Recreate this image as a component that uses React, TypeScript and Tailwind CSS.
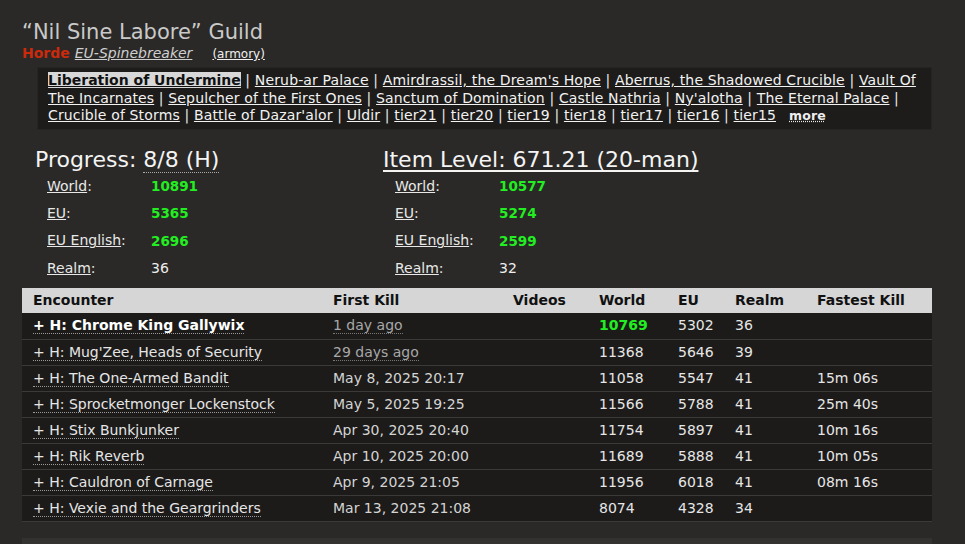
import React from 'react';

const raids = [
  'Nerub-ar Palace',
  "Amirdrassil, the Dream's Hope",
  'Aberrus, the Shadowed Crucible',
  'Vault Of The Incarnates',
  'Sepulcher of the First Ones',
  'Sanctum of Domination',
  'Castle Nathria',
  "Ny'alotha",
  'The Eternal Palace',
  'Crucible of Storms',
  "Battle of Dazar'alor",
  'Uldir',
  'tier21',
  'tier20',
  'tier19',
  'tier18',
  'tier17',
  'tier16',
  'tier15',
];

const stats = [
  { heading: 'Progress: ', value: '8/8 (H)', ranks: ['10891', '5365', '2696', '36'] },
  { heading: 'Item Level: 671.21 (20-man)', value: '', ranks: ['10577', '5274', '2599', '32'] },
];

const rankLabels = ['World', 'EU', 'EU English', 'Realm'];

const kills = [
  { name: 'Chrome King Gallywix', first: '1 day ago', recent: true, world: '10769', eu: '5302', realm: '36', fastest: '', top: true },
  { name: "Mug'Zee, Heads of Security", first: '29 days ago', recent: true, world: '11368', eu: '5646', realm: '39', fastest: '' },
  { name: 'The One-Armed Bandit', first: 'May 8, 2025 20:17', world: '11058', eu: '5547', realm: '41', fastest: '15m 06s' },
  { name: 'Sprocketmonger Lockenstock', first: 'May 5, 2025 19:25', world: '11566', eu: '5788', realm: '41', fastest: '25m 40s' },
  { name: 'Stix Bunkjunker', first: 'Apr 30, 2025 20:40', world: '11754', eu: '5897', realm: '41', fastest: '10m 16s' },
  { name: 'Rik Reverb', first: 'Apr 10, 2025 20:00', world: '11689', eu: '5888', realm: '41', fastest: '10m 05s' },
  { name: 'Cauldron of Carnage', first: 'Apr 9, 2025 21:05', world: '11956', eu: '6018', realm: '41', fastest: '08m 16s' },
  { name: 'Vexie and the Geargrinders', first: 'Mar 13, 2025 21:08', world: '8074', eu: '4328', realm: '34', fastest: '' },
];

export default function App() {
  return (
    <div className="min-h-[544px] bg-[#2a2927] text-[#e8e8e8] font-['DejaVu_Sans',Verdana,sans-serif] px-[22px] pt-[19px] overflow-hidden">
      {/* Guild header */}
      <div className="text-[21px] leading-[26px] text-[#c9c9c9]">“Nil Sine Labore” Guild</div>
      <div className="flex items-baseline text-[14px] leading-[17px]">
        <span className="font-bold text-[#cc2a0c]">Horde</span>
        <span className="ml-[5px] italic underline text-[#cfcfcf]">EU-Spinebreaker</span>
        <span className="ml-[20px] text-[12px] underline text-[#f0f0f0]">(armory)</span>
      </div>

      {/* Raid nav */}
      <div className="ml-[15px] mt-[4px] w-[895px] bg-[#1d1c1a] border border-[#252423] pl-[10px] pr-[12px] pt-[4px] pb-[4px] text-[14px] leading-[17.5px] tracking-[0.15px]">
        <span className="bg-[#d8d8d8] text-[#111] font-bold underline tracking-normal">Liberation of Undermine</span>
        {raids.map((r) => (
          <span key={r}>
            {' | '}
            <span className="underline text-[#f2f2f2]">{r}</span>
          </span>
        ))}
        <span className="ml-[13px] text-[12.5px] font-bold underline decoration-dotted text-[#eee]">more</span>
      </div>

      {/* Progress / item level */}
      <div className="flex mt-[18px] pl-[13px]">
        {stats.map((s, i) => (
          <div key={i} className="w-[348px]">
            <div className="text-[22px] leading-[24px] text-[#f4f4f4] whitespace-nowrap">
              {s.value ? (
                <>
                  {s.heading}
                  <span className="border-b border-dotted border-[#aaa]">{s.value}</span>
                </>
              ) : (
                <span className="underline underline-offset-[3px]">{s.heading}</span>
              )}
            </div>
            <div className="pl-[12px] pt-[1px] text-[14px]">
              {rankLabels.map((l, j) => (
                <div key={l} className="flex h-[27.4px] items-center">
                  <span className="w-[104px]">
                    <span className="underline">{l}</span>:
                  </span>
                  <span className={j < 3 ? 'font-bold text-[13.5px] text-[#22ee22]' : 'text-[#eee]'}>{s.ranks[j]}</span>
                </div>
              ))}
            </div>
          </div>
        ))}
      </div>

      {/* Kills table */}
      <table className="mt-[6px] w-[910px] border-collapse text-[14px] table-fixed">
        <colgroup>
          <col className="w-[300px]" />
          <col className="w-[180px]" />
          <col className="w-[86px]" />
          <col className="w-[79px]" />
          <col className="w-[57px]" />
          <col className="w-[82px]" />
          <col className="w-[126px]" />
        </colgroup>
        <thead>
          <tr className="bg-[#d6d6d6] text-[#111] font-bold h-[25px] text-left">
            <th className="pl-[11px]">Encounter</th>
            <th className="pl-[11px]">First Kill</th>
            <th className="pl-[11px]">Videos</th>
            <th className="pl-[11px]">World</th>
            <th className="pl-[11px]">EU</th>
            <th className="pl-[11px]">Realm</th>
            <th className="pl-[11px]">Fastest Kill</th>
          </tr>
        </thead>
        <tbody>
          {kills.map((k) => (
            <tr key={k.name} className="h-[26px] bg-[#1c1b1a] border-b border-[#3b3a39] text-[#e6e6e6]">
              <td className="pl-[11px] whitespace-nowrap">
                <span className={`border-b border-dotted border-[#999] ${k.top ? 'font-bold text-white' : ''}`}>
                  + H: {k.name}
                </span>
              </td>
              <td className="pl-[11px] whitespace-nowrap">
                <span className={k.recent ? 'text-[#a8a8a8] border-b border-dotted border-[#777]' : 'text-[#d4d4d4]'}>
                  {k.first}
                </span>
              </td>
              <td />
              <td className={`pl-[11px] ${k.top ? 'font-bold text-[#22ee22]' : ''}`}>{k.world}</td>
              <td className="pl-[11px]">{k.eu}</td>
              <td className="pl-[11px]">{k.realm}</td>
              <td className="pl-[11px]">{k.fastest}</td>
            </tr>
          ))}
        </tbody>
      </table>

      <div className="mt-[16px] w-[910px] h-[20px] bg-[#333231]" />
    </div>
  );
}
